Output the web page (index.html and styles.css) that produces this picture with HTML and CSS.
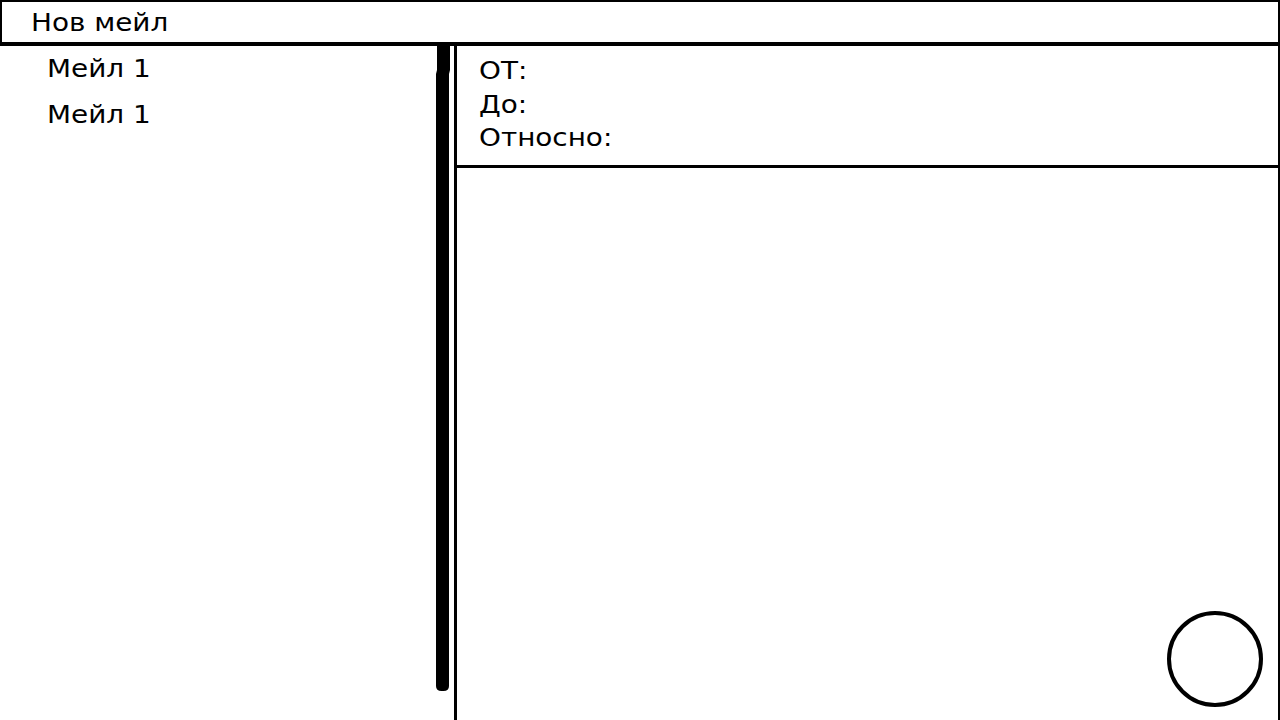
FILE: index.html
```html
<!DOCTYPE html>
<html lang="bg">
<head>
  <meta charset="UTF-8">
  <meta name="viewport" content="width=device-width, initial-scale=1.0">
  <title>Поща</title>
  <link rel="stylesheet" href="styles.css">
</head>
<body>
  <!-- Top bar -->
  <header class="top-bar">
    <span class="label">Нов мейл</span>
  </header>

  <div class="main">
    <!-- Mail list -->
    <ul class="mail-list">
      <li><span class="label">Мейл 1</span></li>
      <li><span class="label">Мейл 1</span></li>
    </ul>

    <div class="scrollbar">
      <svg width="18" height="646" viewBox="0 0 18 646">
        <path d="M3 0 H16 V24 L15 28 V640 Q15 645 9.5 645 H7.5 Q2 645 2 640 V28 L3 24 Z" fill="#000"/>
      </svg>
    </div>

    <!-- Reading pane -->
    <section class="reader">
      <div class="reader-head">
        <div><span class="label">ОТ:</span></div>
        <div><span class="label">До:</span></div>
        <div><span class="label">Относно:</span></div>
      </div>
      <div class="reader-body">
        <button class="fab" aria-label="Действие"></button>
      </div>
    </section>
  </div>
</body>
</html>
```

FILE: styles.css
```css
html, body {
  height: 100%;
}

body {
  margin: 0;
  font-family: "DejaVu Sans", sans-serif;
  font-size: 24px;
  color: #000;
  background: #fff;
  display: flex;
  flex-direction: column;
  overflow: hidden;
}

/* text in the sketch is drawn a bit wider than the font */
.label {
  display: inline-block;
  transform: scaleX(1.16);
  transform-origin: left center;
  white-space: nowrap;
}

.top-bar {
  height: 40px;
  border: 2px solid #000;
  border-bottom-width: 4px;
  display: flex;
  align-items: center;
  padding-left: 29px;
}

.top-bar .label {
  margin-top: 2px;
}

.main {
  flex: 1;
  display: flex;
}

.mail-list {
  list-style: none;
  margin: 0;
  padding: 5px 0 0 47px;
  width: 387px;
}

.mail-list li {
  height: 46px;
  line-height: 36px;
}

.scrollbar {
  width: 18px;
}

.scrollbar svg {
  display: block;
}

.reader {
  flex: 1;
  display: flex;
  flex-direction: column;
  margin-left: 2px;
  border-left: 3px solid #000;
  border-right: 2px solid #000;
}

.reader-head {
  height: 122px;
  padding: 9px 0 0 22px;
  box-sizing: border-box;
  border-bottom: 3px solid #000;
  line-height: 33.5px;
}

.reader-body {
  flex: 1;
  position: relative;
  margin-right: -2px;
}

.fab {
  position: absolute;
  right: 17px;
  bottom: 13px;
  width: 96px;
  height: 96px;
  border: 4px solid #000;
  border-radius: 50%;
  background: #fff;
  padding: 0;
  cursor: pointer;
}
```
